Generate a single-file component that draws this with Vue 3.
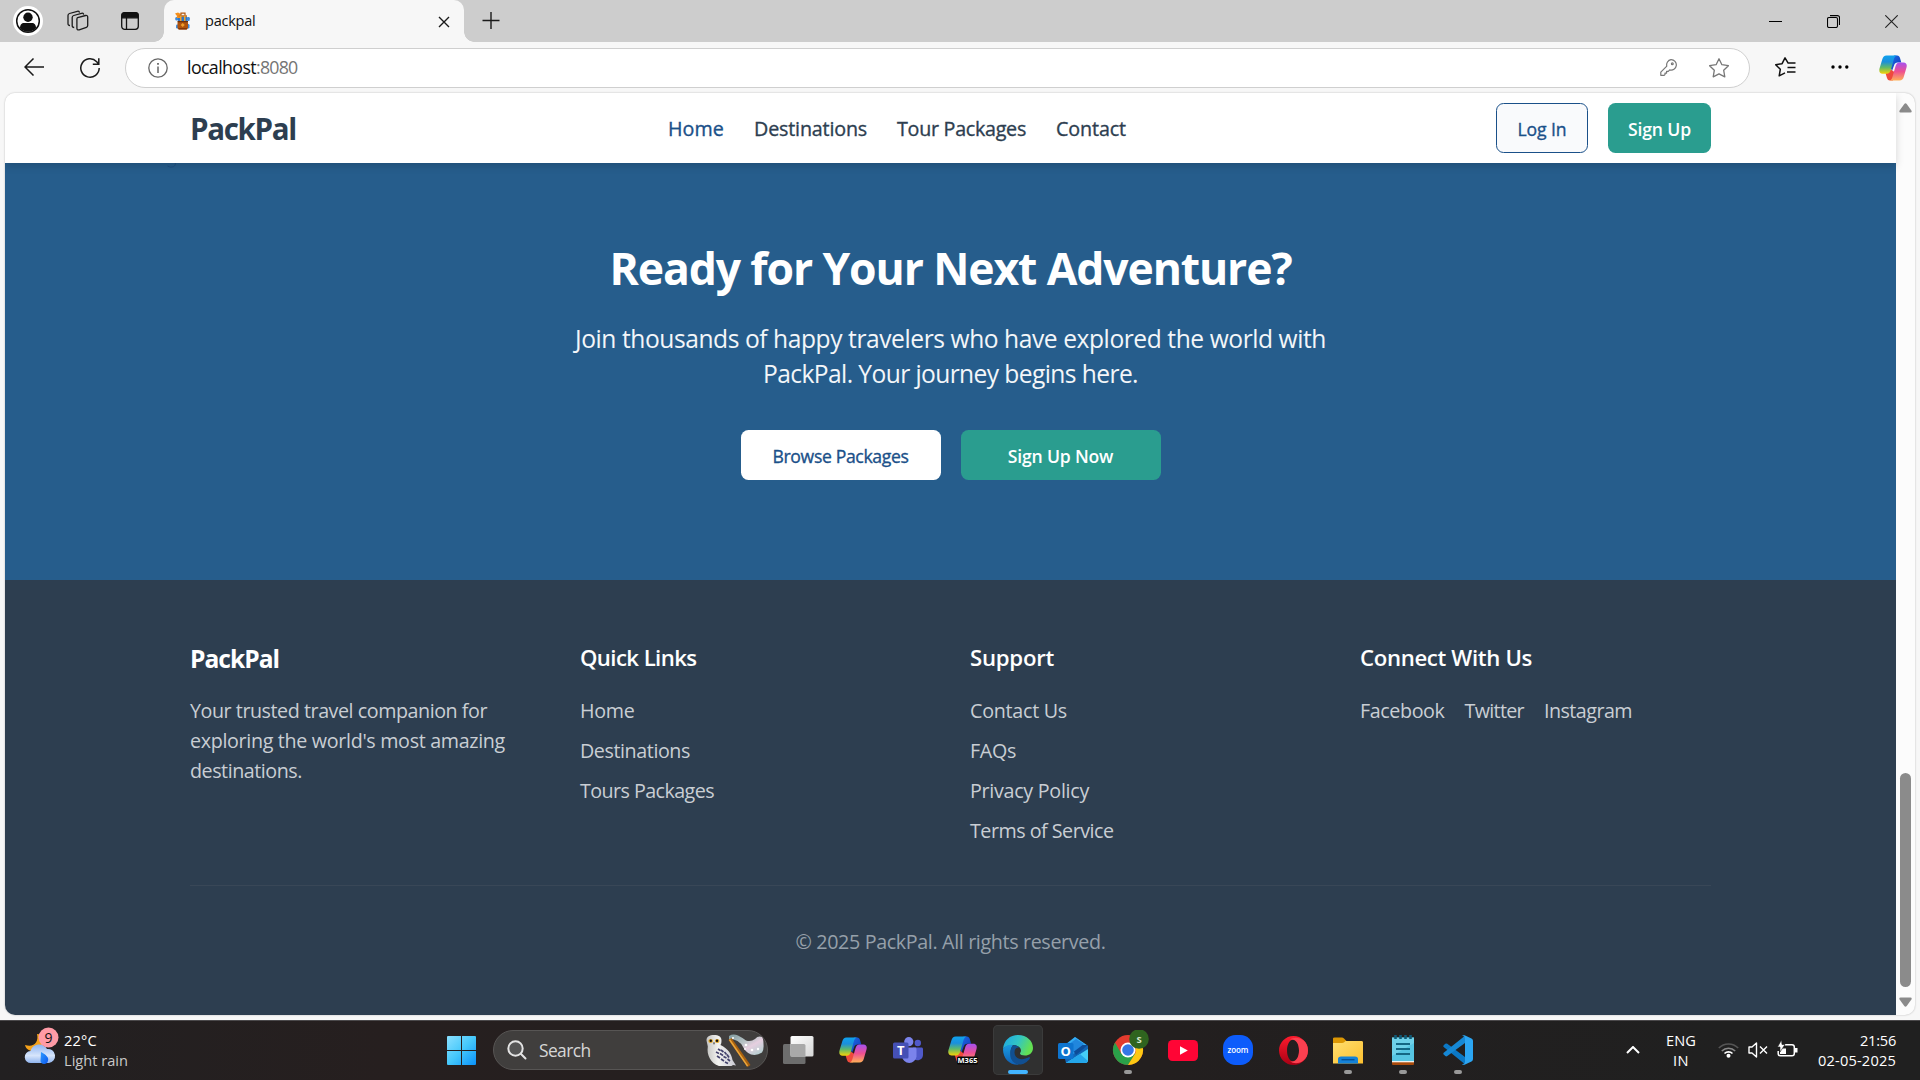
<script setup>
// v-fit="px": evens out the tracking so a label takes its design width
const vFit = {
  mounted(el, { value }) {
    const width = el.getBoundingClientRect().width
    const count = el.textContent.trim().length
    el.style.letterSpacing = `${((value - width) / count).toFixed(3)}px`
  },
}

const nav = [
  { label: 'Home', width: 56, active: true },
  { label: 'Destinations', width: 113 },
  { label: 'Tour Packages', width: 129 },
  { label: 'Contact', width: 70 },
]
const about = [
  { label: 'Your trusted travel companion for', width: 297 },
  { label: "exploring the world's most amazing", width: 315 },
  { label: 'destinations.', width: 112 },
]
const quick = [
  { label: 'Home', width: 54.5 },
  { label: 'Destinations', width: 110 },
  { label: 'Tours Packages', width: 134 },
]
const support = [
  { label: 'Contact Us', width: 97 },
  { label: 'FAQs', width: 46 },
  { label: 'Privacy Policy', width: 119 },
  { label: 'Terms of Service', width: 143.5 },
]
const social = [
  { label: 'Facebook', width: 84.5 },
  { label: 'Twitter', width: 59.5 },
  { label: 'Instagram', width: 88 },
]
</script>

<template>
  <div class="desktop">
    <svg class="defs" width="0" height="0">
      <defs>
        <linearGradient id="cpA" x1="0" y1="0" x2="0" y2="1">
          <stop offset="0" stop-color="#0fa2ee" /><stop offset=".35" stop-color="#1b8fdc" />
          <stop offset=".65" stop-color="#5fb96a" /><stop offset="1" stop-color="#f6d306" />
        </linearGradient>
        <linearGradient id="cpB" x1="0" y1="0" x2="0" y2="1">
          <stop offset="0" stop-color="#a650f0" /><stop offset=".5" stop-color="#ee5091" />
          <stop offset="1" stop-color="#ffb057" />
        </linearGradient>
        <linearGradient id="cpC" x1="0" y1="0" x2="1" y2="1">
          <stop offset="0" stop-color="#1b6fe8" /><stop offset="1" stop-color="#1236b8" />
        </linearGradient>
        <symbol id="copilot" viewBox="0 0 28 26">
          <path d="M15 .5h3.200c1.500 0 2.300 1 2.800 2.500l1.300 4.500h-3.600c-2 0-3 1-3.600 2.800L13 16l-3-7z" fill="url(#cpC)" />
          <path d="M6.600 18.500 8 23c.500 1.700 1.500 2.500 3 2.500h3l2-8-4-3z" fill="#ef4a3c" />
          <path d="M7.500.500h10.500c-1.800.500-2.600 2-3.200 4l-3 10.500c-.7 2.400-1.800 3.800-4.200 3.800H3.500C.8 18.800-.2 16.500.5 13.600L3.300 4.300C4 1.800 5.200.5 7.500.5z" fill="url(#cpA)" />
          <path d="M20.500 7.500h4c2.800 0 3.800 2.300 3 5l-2.700 9.300c-.7 2.500-2 3.700-4.300 3.700H10.500c1.800-.5 2.500-2 3-3.800l3-10.400c.7-2.400 1.700-3.800 4-3.800z" fill="url(#cpB)" />
        </symbol>
      </defs>
    </svg>

    <!-- tab strip -->
    <div class="tabstrip">
      <svg class="profile" width="30" height="30" viewBox="0 0 30 30">
        <circle cx="15" cy="15" r="15" fill="#fff" />
        <circle cx="15" cy="15" r="11.300" fill="none" stroke="#111" stroke-width="1.500" />
        <circle cx="15" cy="11.200" r="4.700" fill="#111" />
        <path d="M7 22.300c0-3.800 1.700-5.300 4-5.300h8c2.300 0 4 1.500 4 5.300a11 11 0 0 1-16 0z" fill="#111" />
      </svg>
      <svg class="spaces" width="22" height="22" viewBox="0 0 22 22" fill="none" stroke="#1c1c1c" stroke-width="1.300">
        <path d="m10.600 7.600 8-2.100c1.300-.300 2.100.300 2.100 1.500v8.500c0 1-.400 1.600-1.300 1.900l-7.200 2.400c-1.400.400-2.300-.2-2.300-1.500v-9c0-.900.200-1.500.700-1.700z" />
        <path d="M7.200 17.500c-1.300 0-2-.6-2-1.700V7.500c0-1.100.5-1.700 1.500-2l7.800-2.200c1.300-.3 2 .2 2.200 1.300" />
        <path d="M3 15.500c-1.300 0-2-.6-2-1.700V5.500c0-1.100.5-1.700 1.500-2l7.800-2.200c1.300-.3 2 .2 2.200 1.300" />
      </svg>
      <svg class="vtabs" width="18" height="18" viewBox="0 0 18 18" fill="none" stroke="#111" stroke-width="1.300">
        <rect x=".7" y=".7" width="16.600" height="16.600" rx="3" /><path d="M5.500 5v12" />
        <path d="M1 5.800V3a2 2 0 0 1 2-2h12a2 2 0 0 1 2 2v2.800z" fill="#111" />
      </svg>
      <div class="tab">
        <svg class="favicon" width="15" height="18" viewBox="0 0 15 18">
          <rect x=".3" y="5" width="3" height="3.500" rx="1.200" fill="#3d8bdc" /><rect x="11.800" y="5" width="3" height="4" rx="1.200" fill="#3d8bdc" />
          <rect x="1" y="12.500" width="3" height="4" rx="1.200" fill="#3d8bdc" /><rect x="11.500" y="12" width="3" height="4.500" rx="1.200" fill="#3d8bdc" />
          <rect x="3" y="3.500" width="9" height="6" rx="1" fill="#3176c4" />
          <path d="M0 1.500 3 .5 6 2 5 6H1.500L2 4z" fill="#f5901d" /><path d="M6 3.500V1.200h4v2.300" fill="none" stroke="#b4580e" stroke-width="1.200" />
          <path d="M3.500 3.300h8.500v1.500H3.500z" fill="#d97a1b" /><path d="M5 4h1.500v5H5zm4 0h1.500v5H9z" fill="#f1a12b" />
          <rect x="2.500" y="9" width="10.500" height="8.500" rx="2" fill="#b0530c" /><path d="M2.500 9h10.500v1.300H2.500z" fill="#6d300a" />
          <path d="m7.700 11 2 2-2 2-2-2z" fill="#f0a02d" /><path d="M3.500 16h8.500v1.500H3.500z" fill="#813709" />
        </svg>
        <span v-fit="50.500" class="tab-title">packpal</span>
        <svg width="12" height="12" viewBox="0 0 12 12" stroke="#1a1a1a" stroke-width="1.400"><path d="m1 1 10 10M11 1 1 11" /></svg>
      </div>
      <svg class="plus" width="18" height="18" viewBox="0 0 18 18" stroke="#1a1a1a" stroke-width="1.400"><path d="M.5 8.500h17M9 0v17" /></svg>
      <div class="winctl">
        <svg width="13" height="13" viewBox="0 0 13 13" stroke="#000"><path d="M0 6.500h13" /></svg>
        <svg width="13" height="13" viewBox="0 0 13 13" fill="none" stroke="#000" stroke-width="1.100"><rect x=".5" y="2.500" width="10" height="10" rx="1.500" /><path d="M3 .600h7.500a2 2 0 0 1 2 2V10" /></svg>
        <svg width="13" height="13" viewBox="0 0 13 13" stroke="#222" stroke-width="1.100"><path d="m.3.300 12.400 12.400M12.700.300.300 12.700" /></svg>
      </div>
    </div>

    <!-- toolbar -->
    <div class="toolbar">
      <svg class="back" width="21" height="18" viewBox="0 0 21 18" fill="none" stroke="#1a1a1a" stroke-width="1.500"><path d="M1 9h19M9.500.500 1 9l8.500 8.500" /></svg>
      <svg class="reload" width="20" height="20" viewBox="0 0 20 20" fill="none" stroke="#1a1a1a" stroke-width="1.500"><path d="M19.200 10A9.200 9.200 0 1 1 16.700 3.700L18.500 5.800M18.800.300v5.900h-6" /></svg>
      <div class="address">
        <svg class="info" width="20" height="20" viewBox="0 0 20 20" fill="none" stroke="#666" stroke-width="1.300"><circle cx="10" cy="10" r="9.200" /><path d="M10 8.500V15" stroke-width="1.500" /><path d="M10 5v1.800" stroke-width="1.800" /></svg>
        <span class="url"><span v-fit="69">localhost</span><span v-fit="41.500" class="port">:8080</span></span>
        <svg class="key" width="17" height="17" viewBox="0 0 17 17" fill="none" stroke="#777" stroke-width="1.200"><path d="M11 .700a5.200 5.200 0 1 1-1.300 10.200L8.300 12.300H6.600v1.800H5v1.500l-.8.700H.8v-3.200l6-6A5.200 5.200 0 0 1 11 .700z" stroke-linejoin="round" /><circle cx="12.300" cy="4.700" r=".9" /></svg>
        <svg class="star" width="20" height="20" viewBox="0 0 20 20" fill="none" stroke="#777" stroke-width="1.300" stroke-linejoin="round"><path d="m10 .800 2.900 5.900 6.500 1-4.700 4.600 1.100 6.500-5.800-3-5.800 3 1.100-6.500L.600 7.700l6.500-1z" /></svg>
      </div>
      <svg class="favs" width="21" height="20" viewBox="0 0 21 20" fill="none" stroke="#111" stroke-width="1.500" stroke-linejoin="round"><path d="M13 5.900 10 .800 7.100 6.700l-6.400 1 4.600 4.600-1.100 6.500 5.800-3" /><path d="M12.500 5.900h8M12.500 10.500H20.500M12 15h8.500" /></svg>
      <svg class="dots" width="18" height="4" viewBox="0 0 18 4"><circle cx="2" cy="2" r="1.700" /><circle cx="9" cy="2" r="1.700" /><circle cx="15.800" cy="2" r="1.700" /></svg>
      <svg class="cp" width="28" height="26"><use href="#copilot" /></svg>
    </div>

    <!-- browser viewport -->
    <div class="viewport">
      <div class="page">
        <header class="header">
          <div class="logo-wrap"><span v-fit="106" class="logo">PackPal</span></div>
          <nav class="nav">
            <a v-for="n in nav" :key="n.label" v-fit="n.width" :class="{ active: n.active }">{{ n.label }}</a>
          </nav>
          <div class="auth">
            <button class="btn login"><span v-fit="49">Log In</span></button>
            <button class="btn signup"><span v-fit="63">Sign Up</span></button>
          </div>
        </header>

        <section class="hero">
          <svg class="hook" width="10" height="5" viewBox="0 0 10 5" fill="none" stroke="#1f4f80"><path d="M.5 3q3 2 6 .8Q8.500 2.500 8.500 0" /></svg>
          <h1><span v-fit="682">Ready for Your Next Adventure?</span></h1>
          <p>
            <span v-fit="751">Join thousands of happy travelers who have explored the world with</span>
            <span v-fit="375">PackPal. Your journey begins here.</span>
          </p>
          <div class="cta">
            <button class="btn wide light"><span v-fit="136">Browse Packages</span></button>
            <button class="btn wide green"><span v-fit="105.500">Sign Up Now</span></button>
          </div>
        </section>

        <footer class="footer">
          <div class="cols">
            <div class="col">
              <h2><span v-fit="89">PackPal</span></h2>
              <p class="about"><span v-for="a in about" :key="a.label" v-fit="a.width">{{ a.label }}</span></p>
            </div>
            <div class="col">
              <h3><span v-fit="116.500">Quick Links</span></h3>
              <ul><li v-for="q in quick" :key="q.label"><span v-fit="q.width">{{ q.label }}</span></li></ul>
            </div>
            <div class="col">
              <h3><span v-fit="84">Support</span></h3>
              <ul><li v-for="s in support" :key="s.label"><span v-fit="s.width">{{ s.label }}</span></li></ul>
            </div>
            <div class="col">
              <h3><span v-fit="172">Connect With Us</span></h3>
              <div class="social"><span v-for="s in social" :key="s.label" v-fit="s.width">{{ s.label }}</span></div>
            </div>
          </div>
          <div class="copy"><span v-fit="310">© 2025 PackPal. All rights reserved.</span></div>
        </footer>
      </div>
      <div class="scrollbar">
        <svg width="13" height="10" viewBox="0 0 13 10"><path d="M5.300 1q1.200-1.500 2.400 0l4.700 6.500q.9 2-1 2H1.600q-1.900 0-1-2z" fill="#8b8b8b" /></svg>
        <div class="thumb"></div>
        <svg width="13" height="10" viewBox="0 0 13 10"><path d="M5.300 9q1.200 1.500 2.400 0l4.700-6.500q.9-2-1-2H1.600q-1.900 0-1 2z" fill="#8b8b8b" /></svg>
      </div>
    </div>

    <!-- taskbar -->
    <div class="taskbar">
      <div class="weather">
        <svg width="36" height="38" viewBox="0 0 36 38">
          <defs>
            <linearGradient id="cl" x1="0" y1="0" x2="0" y2="1"><stop offset="0" stop-color="#8db4f2" /><stop offset=".6" stop-color="#d7e5fb" /><stop offset="1" stop-color="#8fb4ee" /></linearGradient>
            <linearGradient id="dr" x1="0" y1="0" x2="1" y2="1"><stop offset="0" stop-color="#2f9bff" /><stop offset="1" stop-color="#0a58f0" /></linearGradient>
          </defs>
          <path d="M13 7c2 8-3 14-12 11 1 4 4 6 9 6 7 0 11-5 9-12-1-3-3-5-6-5z" fill="#f5a21b" />
          <path d="M7 36a6 6 0 0 1-.5-12A9 9 0 0 1 23 22a7 7 0 0 1 2 14z" fill="url(#cl)" />
          <path d="M17 25c5 3 8 5 7 9s-7 4-7.500 0z" fill="url(#dr)" />
          <circle cx="24.500" cy="10.500" r="10" fill="#ff9ba6" />
          <text x="24.500" y="15.500" text-anchor="middle" class="badge">9</text>
        </svg>
        <div class="wtext"><span v-fit="33">22°C</span><span v-fit="64" class="dim">Light rain</span></div>
      </div>

      <div class="apps">
        <div class="slot">
          <svg width="29" height="29" viewBox="0 0 29 29">
            <defs><linearGradient id="wn" x1="0" y1="0" x2="29" y2="29" gradientUnits="userSpaceOnUse"><stop offset="0" stop-color="#8be0ff" /><stop offset=".5" stop-color="#45c8fb" /><stop offset="1" stop-color="#0a91fa" /></linearGradient></defs>
            <path d="M1 0h13v14H0V1a1 1 0 0 1 1-1zm14 0h13a1 1 0 0 1 1 1v13H15zM0 15h14v14H1a1 1 0 0 1-1-1zm15 0h14v13a1 1 0 0 1-1 1H15z" fill="url(#wn)" />
          </svg>
        </div>
        <div class="search">
          <svg width="20" height="20" viewBox="0 0 20 20" fill="none" stroke="#e4e4e4" stroke-width="2" stroke-linecap="round"><circle cx="8.500" cy="8.500" r="7.200" fill="#555" /><path d="m13.800 13.800 4.700 4.700" /></svg>
          <span v-fit="51.500">Search</span>
          <svg class="owl" width="58" height="33" viewBox="0 0 58 33">
            <defs>
              <linearGradient id="fl" x1="0" y1="0" x2="1" y2="1"><stop offset="0" stop-color="#7f9b9e" /><stop offset=".4" stop-color="#b9c3c6" /><stop offset=".6" stop-color="#e6cfe0" /><stop offset="1" stop-color="#a9cfcd" /></linearGradient>
              <linearGradient id="ow" x1="0" y1="0" x2="1" y2="0"><stop offset="0" stop-color="#c4c4c2" /><stop offset=".4" stop-color="#f3f3f0" /><stop offset="1" stop-color="#c9c9d2" /></linearGradient>
            </defs>
            <path d="M.5 6.500C.5 2.500 3.500 1 8 1s7.500 1.500 7.500 5.500c0 2.500-.5 3.700-1 4.500 8 4 11 9 12 15l3.500 5.500-3-.5-1.500 1H13C4.500 29 .5 21 1.800 12.500z" fill="url(#ow)" />
            <path d="m12 15 2.500 1.500M10 18l3 1.500M15 16l2.500 2M14 19.500l3 2M18.500 18l2 2.500M11 22l3 2M17.500 22.500l3 1.500M21 20.500l2 3M15 25l3 2M21.500 25l2.500 2M19 28l3 1.500" stroke="#43426c" stroke-width="1.700" fill="none" />
            <ellipse cx="4.700" cy="7" rx="2.300" ry="2" fill="#e2a82b" /><ellipse cx="11.200" cy="7" rx="2.300" ry="2" fill="#e2a82b" /><circle cx="4.800" cy="6.700" r="1.200" fill="#111" /><circle cx="11" cy="6.700" r="1.200" fill="#111" /><path d="m7 8.500 1 2.500 1-2.500z" fill="#444" />
            <path d="M23 2Q27-.500 32 1.500 37 4 40 6.500 45 8 49 5 52 1.500 56 3 57.500 5 57.500 10 58 16 56 18.500 51 22 45 20.500 40 18.500 37 13 33 5 23 5z" fill="url(#fl)" />
            <path d="M24 5 43 32" stroke="#a9610f" stroke-width="3.600" /><path d="M23.500 5.500 41.500 32" stroke="#eaa63c" stroke-width="1.400" />
            <g fill="#fff"><circle cx="27" cy="4" r="1" /><circle cx="40" cy="11" r="1.300" /><circle cx="46" cy="16" r="1.300" /><circle cx="52" cy="15" r="1.200" /><circle cx="39" cy="15" r=".9" /></g>
          </svg>
        </div>
        <div class="slot">
          <svg width="31" height="28" viewBox="0 0 31 28">
            <defs><linearGradient id="tv" x1="0" y1="0" x2="1" y2="1"><stop offset="0" stop-color="#fff" /><stop offset="1" stop-color="#d6d6d6" /></linearGradient></defs>
            <rect x="0" y="8" width="22.500" height="20" rx="1.500" fill="#6d6d6d" /><rect x="7.500" y="0" width="23" height="20.500" rx="1.500" fill="url(#tv)" /><path d="M7.500 8H21a1.500 1.500 0 0 1 1.500 1.500v11h-15z" fill="#a9a9a9" />
          </svg>
        </div>
        <div class="slot"><svg width="28" height="26"><use href="#copilot" /></svg></div>
        <div class="slot">
          <svg width="30" height="27" viewBox="0 0 30 27">
            <circle cx="24.800" cy="6" r="3.200" fill="#5059c9" /><path d="M20 10.500h8.500c.9 0 1.500.6 1.500 1.500v6a5.500 5.500 0 0 1-9 4z" fill="#5059c9" />
            <circle cx="15.800" cy="4.700" r="4.600" fill="#7b83eb" /><path d="M9 10.500h13c.9 0 1.500.6 1.500 1.500v7.500a7.300 7.300 0 0 1-14.500 0z" fill="#7b83eb" />
            <rect x="0" y="5.500" width="15.500" height="16" rx="1.500" fill="#4550b5" /><text x="7.700" y="18" text-anchor="middle" class="t-letter">T</text>
          </svg>
        </div>
        <div class="slot">
          <svg width="32" height="29" viewBox="0 0 32 29">
            <svg x="0" y="0" width="31" height="27"><use href="#copilot" /></svg>
            <rect x="10" y="20.500" width="21" height="8" rx="1.500" fill="#080808" /><text x="20.500" y="27.300" text-anchor="middle" class="m365">M365</text>
          </svg>
        </div>
        <div class="slot current">
          <svg width="30" height="30" viewBox="0 0 30 30">
            <defs>
              <linearGradient id="e1" x1="0" y1="0" x2="1" y2=".35"><stop offset="0" stop-color="#1ca5e6" /><stop offset=".55" stop-color="#32c5c4" /><stop offset="1" stop-color="#63e052" /></linearGradient>
              <linearGradient id="e2" x1="0" y1="0" x2="0" y2="1"><stop offset="0" stop-color="#1a9ce2" /><stop offset="1" stop-color="#0f5fb4" /></linearGradient>
            </defs>
            <path d="M0 14C1 5 7 0 15 0c9 0 15 6 15 13 0 5-4 7.500-8 7.500-3 0-5-1-5-2 0-.8 1-1.200 1-3C18 12 14 10 10 10c-4 0-8 1.500-10 4z" fill="url(#e1)" />
            <path d="M0 14c2-3 6-5 10-4-2 3-3 6-2 10 1 5 4 8 8 9.800C7 30.500 0 24 0 14z" fill="url(#e2)" />
            <path d="M10 10.200c3 0 5 1 6 2.300-3 0-4.500 2-4.500 5 0 5 5 8 11 6 2-.6 3.800-1.600 4.500-1 .5.500-2.800 5.200-8 6.800-6 1.500-11.500-3.300-11.800-9-.2-4 .8-8 2.800-10.100z" fill="#114f91" />
          </svg>
          <i class="run active"></i>
        </div>
        <div class="slot">
          <svg width="30" height="26" viewBox="0 0 30 26">
            <path d="M4 10 17 0l13 9v14q0 3-3 3H8z" fill="#1165b5" /><path d="M7 8 17 0l12.500 8.600L15 17z" fill="#35aef3" /><path d="M11 8h19L18 18z" fill="#0d4c98" /><path d="M11 7 18 2l8 5-12 9z" fill="#2187dd" />
            <path d="M30 9v14q0 3-3 3H8l22-14z" fill="#45cff7" /><path d="M8 26 22 17l8 7q-1 2-3 2z" fill="#24a6ea" />
            <rect x="0" y="6" width="15.500" height="16" rx="1.500" fill="#0e74cf" /><text x="7.700" y="18.800" text-anchor="middle" class="t-letter">O</text>
          </svg>
        </div>
        <div class="slot">
          <svg width="42" height="40" viewBox="0 0 42 40">
            <circle cx="21" cy="20" r="15" fill="#e33b2e" />
            <path d="M8 12.500A15 15 0 0 0 21 35l7.500-11.500H21L14.500 24z" fill="#2aa049" />
            <path d="M34 12.500A15 15 0 0 1 21 35l7.500-12V12.500z" fill="#fdc813" />
            <circle cx="21" cy="20" r="7.500" fill="#fff" /><circle cx="21" cy="20" r="5.800" fill="#3577e5" />
            <circle cx="32" cy="9" r="9.800" fill="#2f641f" /><text x="32" y="12.500" text-anchor="middle" class="s-badge">S</text>
          </svg>
          <i class="run"></i>
        </div>
        <div class="slot"><svg width="30" height="21" viewBox="0 0 30 21"><rect width="30" height="21" rx="4.500" fill="#ff0535" /><path d="m12 6.300 7.800 4.200-7.800 4.200z" fill="#fff" /></svg></div>
        <div class="slot"><svg width="30" height="30" viewBox="0 0 30 30"><rect width="30" height="30" rx="12.500" fill="#0d5cfb" /><text x="15" y="17.500" text-anchor="middle" class="zoom" textLength="21">zoom</text></svg></div>
        <div class="slot">
          <svg width="29" height="29" viewBox="0 0 29 29">
            <defs><linearGradient id="op" x1="0" y1="0" x2="0" y2="1"><stop offset="0" stop-color="#ff1b2d" /><stop offset="1" stop-color="#a70014" /></linearGradient></defs>
            <path d="M14.500 0a14.500 14.500 0 1 0 0 29 14.500 14.500 0 0 0 0-29zm0 3.500C18 3.500 20 8 20 14.500s-2 11-5.500 11S8 21 8 14.500s3-11 6.500-11z" fill="url(#op)" fill-rule="evenodd" />
            <path d="M11 3.800C15.500-.500 29 2 29 14.500S16 29.500 11 25.200c5 1.500 9-3 9-10.700S16 2.500 11 3.800z" fill="#fb4050" />
          </svg>
        </div>
        <div class="slot">
          <svg width="30" height="27" viewBox="0 0 30 27">
            <defs><linearGradient id="fo" x1="0" y1="0" x2="1" y2="1"><stop offset="0" stop-color="#ffdf70" /><stop offset="1" stop-color="#fdc02f" /></linearGradient></defs>
            <path d="M0 1.500Q0 .500 1.500.500H9q1 0 2 1l2.500 2.500H28q2 0 2 1.500V12H0z" fill="#dc9704" /><path d="M0 6h9q1.500 0 2.500-1l1-1H28.500q1.500 0 1.500 1.500V26.500H0z" fill="url(#fo)" />
            <path d="M5 26.500V22q0-2.500 3-2.500h14q3 0 3 2.500v4.500z" fill="#1582d8" /><path d="M8.500 22.700h13" stroke="#075298" stroke-width="1.400" />
          </svg>
          <i class="run"></i>
        </div>
        <div class="slot">
          <svg width="22" height="30" viewBox="0 0 22 30">
            <path d="M0 25h22v4q0 1-1 1H1q-1 0-1-1z" fill="#a84a0b" /><rect y="25" width="22" height="2.300" fill="#f1f1ee" />
            <path d="M0 2.500h22V26H0z" fill="#56c5e2" /><path d="M0 2.500h22V8L0 21z" fill="#79d5ed" opacity=".7" />
            <path d="M4 9h14M4 14h14M4 19h14" stroke="#146784" stroke-width="1.800" />
            <path d="M3.500 0v4M8.500 0v4M13.500 0v4M18.500 0v4" stroke="#0f5b77" stroke-width="2.600" />
          </svg>
          <i class="run"></i>
        </div>
        <div class="slot">
          <svg width="30" height="30" viewBox="0 0 30 30">
            <path d="M.7 10.300 2.300 8.800q1-.8 2 0L22 22v7.300L.7 12q-.8-.9 0-1.700z" fill="#0b78c5" /><path d="M.7 19.500 2.300 21q1 .8 2 0L22 8V.700L.7 17.800q-.8.900 0 1.700z" fill="#1688d5" />
            <path d="M21.500.300 28.500 3.500q1.500.800 1.500 2.300v18.400q0 1.500-1.500 2.300l-7 3.200q-1.300.5-2.500-.7 3 .5 3-2V3q0-2.500-3-2 1.200-1.200 2.500-.7z" fill="#2ba5f2" />
          </svg>
          <i class="run"></i>
        </div>
      </div>

      <div class="tray">
        <svg class="chev" width="14" height="8" viewBox="0 0 14 8" fill="none" stroke="#fff" stroke-width="2"><path d="m1 7 6-6 6 6" /></svg>
        <div class="lang"><span v-fit="30">ENG</span><span v-fit="16">IN</span></div>
        <svg class="wifi" width="21" height="16" viewBox="0 0 21 16" fill="none" stroke-width="1.600">
          <path d="M.8 6a13.700 13.700 0 0 1 19.400 0" stroke="#555" /><path d="M3.800 9a9.500 9.500 0 0 1 13.400 0" stroke="#888" /><path d="M6.500 11.500a5.700 5.700 0 0 1 8 0" stroke="#fff" /><circle cx="10.500" cy="13.700" r="2" fill="#fff" />
        </svg>
        <svg class="vol" width="20" height="16" viewBox="0 0 20 16" fill="none" stroke="#fff" stroke-width="1.400"><path d="M1 5h3l4.500-4v14L4 11H1z" stroke-linejoin="round" /><path d="m12 4.500 7 7m0-7-7 7" /></svg>
        <svg class="bat" width="21" height="18" viewBox="0 0 21 18"><path d="M8 4.700h7a2.300 2.300 0 0 1 2.300 2.300v6.500a2.300 2.300 0 0 1-2.300 2.300H3.500a2.300 2.300 0 0 1-2.300-2.300V11" fill="none" stroke="#fff" stroke-width="1.500" /><path d="M18 8h2.500v4.500H18zM3 14V9.500l1-1h5V14z" fill="#fff" /><path d="M4.500 0 .5 7H3v5l5-7.500H5z" fill="#fff" stroke="#222" stroke-width=".6" /></svg>
        <div class="clock"><span v-fit="36">21:56</span><span v-fit="78">02-05-2025</span></div>
      </div>
    </div>
  </div>
</template>

<style>
body { margin: 0; overflow: hidden; }
</style>

<style scoped>
.desktop { width: 1920px; height: 1080px; display: flex; flex-direction: column; background: #f7f7f7; font-family: "Open Sans", "Noto Sans", sans-serif; overflow: hidden; }
.desktop * { box-sizing: border-box; }
.desktop svg { display: block; flex: none; }
.desktop .defs { position: absolute; }
span, a { white-space: nowrap; display: inline-block; }
h1, h2, h3, p, ul { margin: 0; padding: 0; }

.tabstrip { height: 42px; flex: none; display: flex; align-items: center; background: #cdcdcd; }
.profile { margin-left: 13px; }
.spaces { margin-left: 24px; }
.vtabs { margin-left: 32px; }
.tab { position: relative; width: 300px; height: 42px; margin-left: 25px; padding: 2px 14px 0 11px; display: flex; align-items: center; background: #f7f7f7; border-radius: 10px 10px 0 0; }
.tab::before, .tab::after { content: ""; position: absolute; bottom: 0; width: 10px; height: 10px; }
.tab::before { left: -10px; background: radial-gradient(circle at 0 0, transparent 9.5px, #f7f7f7 10px); }
.tab::after { right: -10px; background: radial-gradient(circle at 100% 0, transparent 9.5px, #f7f7f7 10px); }
.favicon { margin-top: -2px; }
.tab-title { margin: -3px auto 0 15px; font-size: 14.5px; line-height: 20px; color: #111; }
.plus { margin-left: 18px; }
.winctl { margin-left: auto; margin-right: 22px; display: flex; gap: 45px; }

.toolbar { height: 51px; flex: none; display: flex; align-items: center; padding-bottom: 1px; }
.back { margin-left: 24px; }
.reload { margin-left: 35px; margin-top: 1px; }
.address { width: 1625px; height: 40px; margin-left: 25px; margin-top: 1px; display: flex; align-items: center; background: #fff; border: 1px solid #cfcfcf; border-radius: 20px; }
.info { margin-left: 22px; }
.url { margin: -2px auto 0 19px; font-size: 17.8px; line-height: 24px; color: #111; }
.port { color: #757575; }
.key { margin-right: 32px; }
.star { margin-right: 20px; }
.favs { margin-left: 25px; }
.dots { margin-left: 35px; }
.cp { margin-left: 30px; margin-top: 1px; }

.viewport { width: 1910px; height: 922px; flex: none; margin: 0 0 5px 5px; display: flex; background: #fcfcfc; border-radius: 10px; overflow: hidden; box-shadow: 0 0 2px rgba(0, 0, 0, .28); }
.page { width: 1891px; flex: none; display: flex; flex-direction: column; }
.header { position: relative; z-index: 1; height: 70px; flex: none; padding: 0 185px; display: flex; align-items: center; background: #fff; box-shadow: 0 3px 8px rgba(0, 0, 0, .16); }
.logo-wrap { width: 478px; padding-top: 2px; }
.logo { font-size: 29.5px; line-height: 40px; font-weight: 700; color: #2d3e50; }
.nav { display: flex; gap: 30px; padding-top: 2px; font-size: 19.7px; line-height: 30px; color: #2d3e50; -webkit-text-stroke: .35px currentColor; }
.nav .active { color: #1a5089; }
.auth { margin-left: auto; display: flex; gap: 20px; }
.btn { height: 50px; padding: 3px 0 0; border: 0; border-radius: 7.5px; font-family: inherit; font-size: 17.6px; line-height: 25px; font-weight: 600; text-align: center; }
.login { width: 92px; background: #f9fafc; border: 1px solid #1a5089; padding-top: 2px; color: #1a5089; font-weight: 400; -webkit-text-stroke: .35px currentColor; }
.signup { width: 103px; background: #2a9d8f; color: #fff; }

.hero { position: relative; height: 417px; flex: none; padding-top: 82px; background: #265d8c; color: #fff; text-align: center; }
.hook { position: absolute; left: 162px; top: 0; }
.hero h1 { font-size: 44.5px; line-height: 45px; font-weight: 700; }
.hero h1 span { vertical-align: top; }
.hero p { margin-top: 31px; display: flex; flex-direction: column; align-items: center; font-size: 24.6px; line-height: 35px; color: #f3f6f9; }
.cta { margin-top: 39px; display: flex; justify-content: center; gap: 20px; }
.wide { width: 200px; }
.light { background: #fff; color: #1a5089; font-weight: 400; -webkit-text-stroke: .35px currentColor; }
.green { background: #2a9d8f; color: #fff; }

.footer { flex: 1; padding: 60px 185px 0; background: #2d3e50; color: #c9ced4; font-size: 19.7px; line-height: 30px; }
.cols { display: grid; grid-template-columns: repeat(4, 350px); gap: 40px; height: 245px; }
.footer h2 { height: 56px; font-size: 24.6px; line-height: 37px; font-weight: 700; color: #fff; }
.footer h3 { height: 56px; font-size: 22.2px; line-height: 35px; font-weight: 600; color: #fff; }
.about { display: flex; flex-direction: column; align-items: flex-start; }
.footer ul { list-style: none; display: flex; flex-direction: column; gap: 10px; }
.footer li { height: 30px; }
.social { display: flex; gap: 20px; }
.copy { border-top: 1px solid #394757; padding-top: 41px; text-align: center; color: #96a0aa; }

.scrollbar { width: 19px; flex: none; display: flex; flex-direction: column; align-items: center; padding: 10px 0 8px; }
.thumb { width: 11px; height: 214px; margin: auto 0 10px; border-radius: 6px; background: #8b8b8b; }

.taskbar { position: relative; height: 60px; flex: none; display: flex; align-items: center; background: linear-gradient(90deg, #222021, #261f1f 20%, #231f1f 60%, #202020 90%); box-shadow: inset 0 1px #4b494b; color: #fff; font-size: 14.6px; line-height: 20px; }
.weather { width: 436px; display: flex; align-items: center; padding-left: 24px; }
.weather svg { margin-top: -9px; }
.wtext { margin-left: 4px; margin-top: -1px; display: flex; flex-direction: column; align-items: flex-start; }
.dim { color: #c9c9c9; }
.badge { font-size: 14px; fill: #111; }
.apps { display: flex; align-items: center; gap: 5px; }
.slot { position: relative; width: 50px; height: 50px; display: flex; align-items: center; justify-content: center; border-radius: 5px; }
.current { background: #303030; box-shadow: inset 0 0 0 1px #3b3b3b; }
.run { position: absolute; left: 21px; bottom: 1px; width: 8px; height: 4px; border-radius: 2px; background: #999; }
.run.active { left: 15px; width: 20px; background: #42b4ff; }
.search { width: 275px; height: 40px; margin-left: 2px; padding: 0 3px 0 13px; display: flex; align-items: center; border-radius: 20px; background: #403e3d; border: 1px solid #575554; font-size: 17.4px; color: #d6d6d6; }
.search span { margin-left: 12px; }
.owl { margin-left: auto; }
.t-letter { font-size: 13px; font-weight: 700; fill: #fff; }
.m365 { font-size: 7.5px; font-weight: 700; fill: #fff; }
.s-badge { font-size: 9.5px; font-weight: 700; fill: #d8e8d0; }
.zoom { font-size: 8px; font-weight: 600; fill: #fff; }
.tray { margin-left: auto; margin-right: 24px; display: flex; align-items: center; }
.lang { margin-left: 25px; width: 32px; display: flex; flex-direction: column; align-items: center; }
.wifi { margin-left: 21px; }
.vol { margin-left: 9px; }
.bat { margin-left: 9px; margin-top: -3px; }
.clock { margin-left: 18px; width: 80px; margin-top: -1px; display: flex; flex-direction: column; align-items: flex-end; }
</style>
